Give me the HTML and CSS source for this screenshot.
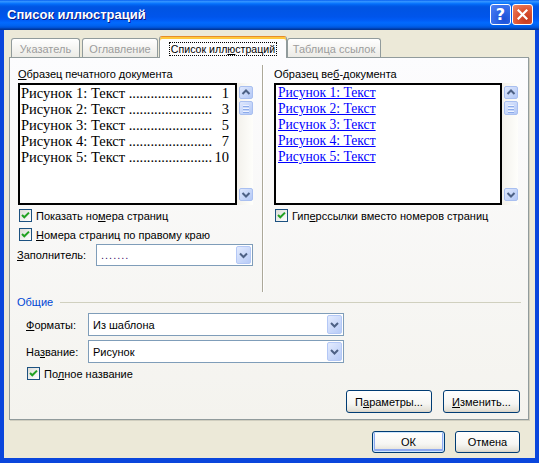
FILE: index.html
```html
<!DOCTYPE html>
<html lang="ru">
<head>
  <meta charset="UTF-8">
  <title>Список иллюстраций</title>
  <link rel="stylesheet" href="styles.css">
</head>
<body>
  <div class="window">
    <div class="titlebar">
      <span class="title">Список иллюстраций</span>
      <div class="caption-buttons">
        <span class="cap-btn help">?</span>
        <span class="cap-btn close">
          <svg width="11" height="11" viewBox="0 0 11 11"><path d="M1.5 1.5 L9.5 9.5 M9.5 1.5 L1.5 9.5" stroke="#fff" stroke-width="2.2" stroke-linecap="square"/></svg>
        </span>
      </div>
    </div>

    <div class="client">
      <div class="tabs">
        <div class="tab tab-index">Указатель</div>
        <div class="tab tab-toc">Оглавление</div>
        <div class="tab active"><span class="focus">Список илл<u>ю</u>страций</span></div>
        <div class="tab tab-refs">Таблица ссылок</div>
      </div>

      <div class="panel">
        <div class="columns">
          <div class="col col-left">
            <div class="caption"><u>О</u>бразец печатного документа</div>
            <div class="preview">
              <div class="preview-box print">
                <div class="entry"><span>Рисунок 1: Текст <span class="dots">.......................</span></span><span>1</span></div>
                <div class="entry"><span>Рисунок 2: Текст <span class="dots">.......................</span></span><span>3</span></div>
                <div class="entry"><span>Рисунок 3: Текст <span class="dots">.......................</span></span><span>5</span></div>
                <div class="entry"><span>Рисунок 4: Текст <span class="dots">.......................</span></span><span>7</span></div>
                <div class="entry"><span>Рисунок 5: Текст <span class="dots">.......................</span></span><span>10</span></div>
              </div>
              <div class="scrollbar">
                <span class="sb-btn"><svg width="12" height="11" viewBox="0 0 12 11"><path d="M2.5 7 L6 3.5 L9.5 7" fill="none" stroke="#4d6185" stroke-width="2"/></svg></span>
                <span class="sb-thumb"></span>
                <span class="sb-space"></span>
                <span class="sb-btn"><svg width="12" height="11" viewBox="0 0 12 11"><path d="M2.5 4 L6 7.5 L9.5 4" fill="none" stroke="#4d6185" stroke-width="2"/></svg></span>
              </div>
            </div>

            <div class="check first">
              <span class="box"><svg width="11" height="11" viewBox="0 0 11 11"><path d="M2 5 L4.3 7.3 L9 2.6" fill="none" stroke="#21a121" stroke-width="2"/></svg></span>
              <span>Показать но<u>м</u>ера страниц</span>
            </div>
            <div class="check">
              <span class="box"><svg width="11" height="11" viewBox="0 0 11 11"><path d="M2 5 L4.3 7.3 L9 2.6" fill="none" stroke="#21a121" stroke-width="2"/></svg></span>
              <span><u>Н</u>омера страниц по правому краю</span>
            </div>

            <div class="fill-row">
              <span class="field-label"><u>З</u>аполнитель:</span>
              <div class="combo fill-combo">
                <span class="combo-text leader">.......</span>
                <span class="combo-btn"><svg width="13" height="16" viewBox="0 0 13 16"><path d="M3 6.5 L6.5 10 L10 6.5" fill="none" stroke="#4d6185" stroke-width="2"/></svg></span>
              </div>
            </div>
          </div>

          <div class="separator"></div>

          <div class="col col-right">
            <div class="caption">Образец ве<u>б</u>-документа</div>
            <div class="preview">
              <div class="preview-box web">
                <div class="link">Рисунок 1: Текст</div>
                <div class="link">Рисунок 2: Текст</div>
                <div class="link">Рисунок 3: Текст</div>
                <div class="link">Рисунок 4: Текст</div>
                <div class="link">Рисунок 5: Текст</div>
              </div>
              <div class="scrollbar">
                <span class="sb-btn"><svg width="12" height="11" viewBox="0 0 12 11"><path d="M2.5 7 L6 3.5 L9.5 7" fill="none" stroke="#4d6185" stroke-width="2"/></svg></span>
                <span class="sb-thumb"></span>
                <span class="sb-space"></span>
                <span class="sb-btn"><svg width="12" height="11" viewBox="0 0 12 11"><path d="M2.5 4 L6 7.5 L9.5 4" fill="none" stroke="#4d6185" stroke-width="2"/></svg></span>
              </div>
            </div>

            <div class="check first">
              <span class="box"><svg width="11" height="11" viewBox="0 0 11 11"><path d="M2 5 L4.3 7.3 L9 2.6" fill="none" stroke="#21a121" stroke-width="2"/></svg></span>
              <span>Гип<u>е</u>рссылки вместо номеров страниц</span>
            </div>
          </div>
        </div>

        <div class="group">
          <div class="group-title"><span>Общие</span><span class="group-line"></span></div>
          <div class="form-row">
            <span class="field-label"><u>Ф</u>орматы:</span>
            <div class="combo">
              <span class="combo-text">Из шаблона</span>
              <span class="combo-btn"><svg width="13" height="17" viewBox="0 0 13 17"><path d="M3 7 L6.5 10.5 L10 7" fill="none" stroke="#4d6185" stroke-width="2"/></svg></span>
            </div>
          </div>
          <div class="form-row">
            <span class="field-label">На<u>з</u>вание:</span>
            <div class="combo">
              <span class="combo-text">Рисунок</span>
              <span class="combo-btn"><svg width="13" height="17" viewBox="0 0 13 17"><path d="M3 7 L6.5 10.5 L10 7" fill="none" stroke="#4d6185" stroke-width="2"/></svg></span>
            </div>
          </div>
          <div class="check full-name">
            <span class="box"><svg width="11" height="11" viewBox="0 0 11 11"><path d="M2 5 L4.3 7.3 L9 2.6" fill="none" stroke="#21a121" stroke-width="2"/></svg></span>
            <span>По<u>л</u>ное название</span>
          </div>
        </div>

        <div class="actions">
          <button class="btn params">П<u>а</u>раметры...</button>
          <button class="btn modify"><u>И</u>зменить...</button>
        </div>
      </div>

      <div class="footer">
        <button class="btn ok">ОК</button>
        <button class="btn cancel">Отмена</button>
      </div>
    </div>
  </div>
</body>
</html>
```

FILE: styles.css
```css
body {
  margin: 0;
  font-family: "Liberation Sans", Arial, sans-serif;
  font-size: 11px;
  color: #000;
  background: #fff;
}

u {
  text-decoration: underline;
  text-underline-offset: 1px;
}

.window {
  width: 539px;
  height: 463px;
  display: flex;
  flex-direction: column;
}

/* title bar */
.titlebar {
  height: 30px;
  flex: none;
  display: flex;
  align-items: center;
  padding: 0 6px 0 7px;
  background: linear-gradient(#0058ee 0%, #3593ff 4%, #288eff 7%, #127dff 10%, #036ffc 13%, #0262ee 17%, #0057e5 22%, #0054e3 27%, #0055eb 56%, #005bf5 66%, #026afe 76%, #0062ef 86%, #0052d6 92%, #0040ab 96%, #003092 100%);
}

.title {
  flex: 1;
  color: #fff;
  font-weight: bold;
  font-size: 13px;
  text-shadow: 1px 1px 0 #0a1883;
  padding-bottom: 1px;
}

.caption-buttons {
  display: flex;
  gap: 1px;
  padding-bottom: 1px;
}

.cap-btn {
  width: 19px;
  height: 19px;
  border: 1px solid #fff;
  border-radius: 3px;
  display: flex;
  align-items: center;
  justify-content: center;
}

.help {
  background: radial-gradient(circle at 70% 75%, #1b4fd6 0%, #2f66e6 45%, #4e82f5 100%);
  color: #fff;
  font-weight: bold;
  font-size: 16px;
  font-family: "DejaVu Sans", sans-serif;
}

.close {
  background: radial-gradient(circle at 70% 75%, #c4391d 0%, #df5634 50%, #ee8a6a 100%);
}

/* client area */
.client {
  flex: 1;
  background: #ece9d8;
  border: 4px solid #0a46dc;
  border-top: none;
  border-bottom-width: 5px;
  padding-top: 6px;
  display: flex;
  flex-direction: column;
}

.tabs {
  height: 21px;
  display: flex;
  align-items: flex-end;
  margin-left: 7px;
}

.tab {
  height: 19px;
  box-sizing: border-box;
  border: 1px solid #919b9c;
  border-bottom: none;
  border-radius: 3px 3px 0 0;
  background: linear-gradient(#ffffff, #ecebe6);
  color: #9d9d9d;
  display: flex;
  align-items: center;
  justify-content: center;
  padding-top: 1px;
}

.tab-index { width: 69px; margin-right: 2px; }
.tab-toc { width: 76px; margin-right: 1px; }
.tab-refs { width: 94px; }

.tab.active {
  width: 128px;
  height: 22px;
  margin-bottom: -1px;
  position: relative;
  z-index: 1;
  color: #000;
  background: #fcfcfe;
  border-top: 1px solid #e68b2c;
  box-shadow: inset 0 2px 0 #ffc83c;
  padding-top: 2px;
  white-space: nowrap;
}

.focus {
  border: 1px dotted #000;
  padding: 0 1px;
  line-height: 12px;
  font-size: 10.6px;
}

/* tab panel */
.panel {
  height: 363px;
  box-sizing: border-box;
  margin: 0 6px 0 5px;
  border: 1px solid #919b9c;
  box-shadow: 1px 1px 0 #d0cebf;
  background: linear-gradient(#fcfcfe, #f4f3ee);
  padding: 10px 7px 0 8px;
  display: flex;
  flex-direction: column;
}

.columns {
  height: 224px;
  display: grid;
  grid-template-columns: 236px 2px 246px;
  column-gap: 8px;
}

.columns .col-right {
  margin-left: 2px;
}

.separator {
  border-left: 1px solid #aca899;
  border-right: 1px solid #fff;
  box-sizing: border-box;
  margin-top: -3px;
}

.caption {
  line-height: 13px;
  height: 13px;
  margin-bottom: 2px;
}

.preview {
  display: flex;
  height: 122px;
}

.preview-box {
  box-sizing: border-box;
  border: 2px solid #000;
  background: #fff;
  font-family: "Liberation Serif", "Times New Roman", serif;
  line-height: 16px;
}

.print {
  width: 219px;
  padding: 0 6px 0 1px;
  font-size: 14.5px;
}

.entry {
  display: flex;
  justify-content: space-between;
  white-space: nowrap;
}

.web {
  width: 230px;
  padding: 0 2px;
}

.link {
  color: #0000ff;
  text-decoration: underline;
  font-size: 13.6px;
}

.scrollbar {
  width: 16px;
  box-sizing: border-box;
  padding: 3px 1px 4px 2px;
  display: flex;
  flex-direction: column;
  background: linear-gradient(90deg, #f3f1ec, #fefefb);
}

.sb-btn, .sb-thumb {
  width: 14px;
  height: 13px;
  box-sizing: border-box;
  border: 1px solid #a9bff0;
  border-radius: 2px;
  background: linear-gradient(135deg, #dfe8fd, #b3c8f6);
  display: flex;
}

.sb-thumb {
  height: 14px;
  margin-top: 2px;
  background:
    linear-gradient(#eef3fe, #eef3fe) 3px 3px / 6px 1px no-repeat,
    linear-gradient(#8cabeb, #8cabeb) 3px 4px / 6px 1px no-repeat,
    linear-gradient(#eef3fe, #eef3fe) 3px 6px / 6px 1px no-repeat,
    linear-gradient(#8cabeb, #8cabeb) 3px 7px / 6px 1px no-repeat,
    linear-gradient(#eef3fe, #eef3fe) 3px 9px / 6px 1px no-repeat,
    linear-gradient(#8cabeb, #8cabeb) 3px 10px / 6px 1px no-repeat,
    linear-gradient(135deg, #dfe8fd, #b3c8f6);
}

.sb-space {
  flex: 1;
}

/* checkboxes */
.check {
  display: flex;
  align-items: center;
  gap: 4px;
  height: 13px;
  margin-top: 6px;
  margin-left: 1px;
}

.check.first {
  margin-top: 4px;
}

.box {
  width: 13px;
  height: 13px;
  box-sizing: border-box;
  border: 1px solid #1c5180;
  background: linear-gradient(135deg, #dcdcd7, #ffffff);
  display: flex;
}

/* combos */
.fill-row {
  display: flex;
  align-items: center;
  margin-top: 3px;
}

.fill-row .field-label {
  width: 79px;
  margin-left: -1px;
}

.combo {
  height: 23px;
  box-sizing: border-box;
  border: 1px solid #7f9db9;
  background: #fff;
  display: flex;
  align-items: center;
  padding: 1px;
}

.fill-combo {
  width: 157px;
  height: 22px;
}

.combo-text {
  flex: 1;
  padding-left: 3px;
}

.leader {
  color: #40106a;
  letter-spacing: 1px;
}

.combo-btn {
  width: 15px;
  align-self: stretch;
  box-sizing: border-box;
  border: 1px solid #b4c8f6;
  border-radius: 2px;
  background: linear-gradient(135deg, #e3ebfe, #b7cbf7);
  display: flex;
  align-items: center;
  justify-content: center;
}

/* general group */
.group {
  margin-top: 4px;
}

.group-title {
  display: flex;
  align-items: center;
  color: #0046d5;
  line-height: 13px;
  margin-left: -1px;
}

.group-line {
  flex: 1;
  height: 1px;
  background: #d0d0bf;
  margin-left: 7px;
}

.form-row {
  display: grid;
  grid-template-columns: 62px 256px;
  align-items: center;
  margin: 4px 0 0 8px;
}

.check.full-name {
  margin: 4px 0 0 9px;
}

/* buttons */
.actions {
  display: flex;
  justify-content: flex-end;
  gap: 11px;
  margin: 10px 1px 0 0;
}

.btn {
  height: 23px;
  box-sizing: border-box;
  border: 1px solid #003c74;
  border-radius: 3px;
  background: linear-gradient(#ffffff 0%, #f6f6f3 60%, #e5e3da 90%, #d6d0c5 100%);
  font-family: inherit;
  font-size: 11px;
  color: #000;
  padding: 0;
  margin: 0;
}

.params { width: 86px; }
.modify { width: 77px; }

.footer {
  display: flex;
  justify-content: flex-end;
  gap: 10px;
  margin: 11px 15px 0 0;
}

.footer .btn {
  height: 22px;
}

.ok {
  width: 73px;
  box-shadow: inset 0 0 0 1px #cee7ff, inset 0 -1px 0 2px #8fa9ef;
}

.cancel {
  width: 65px;
}
```
